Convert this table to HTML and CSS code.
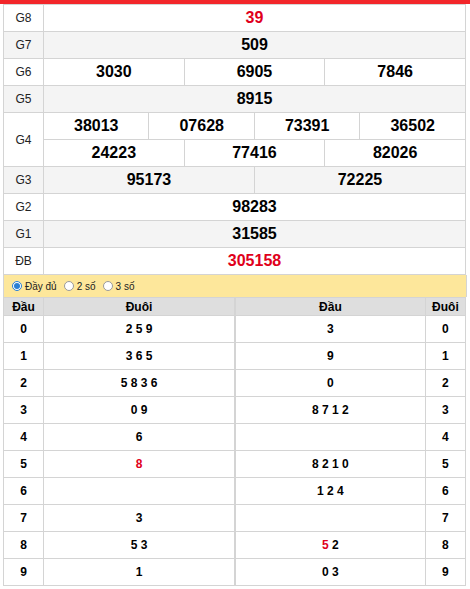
FILE: index.html
```html
<!DOCTYPE html>
<html>
<head>
<meta charset="utf-8">
<link rel="stylesheet" href="styles.css">
</head>
<body>
<div class="topbar"></div>
<div class="wrap">
<table class="kq">
  <colgroup><col class="lbl"><col span="12"></colgroup>
  <tr><td class="l">G8</td><td colspan="12" class="n red">39</td></tr>
  <tr class="alt"><td class="l">G7</td><td colspan="12" class="n">509</td></tr>
  <tr><td class="l">G6</td><td colspan="4" class="n">3030</td><td colspan="4" class="n">6905</td><td colspan="4" class="n">7846</td></tr>
  <tr class="alt"><td class="l">G5</td><td colspan="12" class="n">8915</td></tr>
  <tr><td class="l" rowspan="2">G4</td><td colspan="3" class="n">38013</td><td colspan="3" class="n">07628</td><td colspan="3" class="n">73391</td><td colspan="3" class="n">36502</td></tr>
  <tr><td colspan="4" class="n">24223</td><td colspan="4" class="n">77416</td><td colspan="4" class="n">82026</td></tr>
  <tr class="alt"><td class="l">G3</td><td colspan="6" class="n">95173</td><td colspan="6" class="n">72225</td></tr>
  <tr><td class="l">G2</td><td colspan="12" class="n">98283</td></tr>
  <tr class="alt"><td class="l">G1</td><td colspan="12" class="n">31585</td></tr>
  <tr><td class="l">ĐB</td><td colspan="12" class="n red">305158</td></tr>
</table>
<div class="opts">
  <span class="opt"><span class="radio on"></span>Đầy đủ</span>
  <span class="opt"><span class="radio"></span>2 số</span>
  <span class="opt"><span class="radio"></span>3 số</span>
</div>
<table class="lt">
  <colgroup><col class="c1"><col class="c2"><col class="c3"><col class="c4"></colgroup>
  <tr class="hd"><th>Đầu</th><th class="mid">Đuôi</th><th>Đầu</th><th>Đuôi</th></tr>
  <tr><td>0</td><td class="mid">2 5 9</td><td>3</td><td>0</td></tr>
  <tr><td>1</td><td class="mid">3 6 5</td><td>9</td><td>1</td></tr>
  <tr><td>2</td><td class="mid">5 8 3 6</td><td>0</td><td>2</td></tr>
  <tr><td>3</td><td class="mid">0 9</td><td>8 7 1 2</td><td>3</td></tr>
  <tr><td>4</td><td class="mid">6</td><td></td><td>4</td></tr>
  <tr><td>5</td><td class="mid"><span class="red">8</span></td><td>8 2 1 0</td><td>5</td></tr>
  <tr><td>6</td><td class="mid"></td><td>1 2 4</td><td>6</td></tr>
  <tr><td>7</td><td class="mid">3</td><td></td><td>7</td></tr>
  <tr><td>8</td><td class="mid">5 3</td><td><span class="red">5</span> 2</td><td>8</td></tr>
  <tr><td>9</td><td class="mid">1</td><td>0 3</td><td>9</td></tr>
</table>
</div>
</body>
</html>
```
FILE: styles.css
```css
html, body {
  margin: 0;
  padding: 0;
  background: #fff;
  font-family: "Liberation Sans", Arial, sans-serif;
  color: #000;
}
.topbar {
  height: 4px;
  background: #f2262a;
}
.wrap {
  padding: 0 4px 0 3px;
}
table {
  border-collapse: collapse;
  table-layout: fixed;
  width: 463px;
}
.kq td {
  border: 1px solid #d4d4d4;
  height: 26px;
  padding: 0;
  text-align: center;
}
.kq col.lbl { width: 40px; }
.kq .l {
  font-size: 12px;
  color: #222;
}
.kq .n {
  font-size: 16px;
  font-weight: bold;
}
.kq tr.alt td { background: #f4f4f4; }
.red { color: #e0001b; }
.opts {
  height: 22px;
  background: #fde79b;
  border-left: 1px solid #d4d4d4;
  border-right: 1px solid #d4d4d4;
  display: flex;
  align-items: center;
  padding-left: 8px;
  gap: 7px;
  font-size: 10px;
  color: #222;
  width: 454px;
}
.opt {
  display: flex;
  align-items: center;
  gap: 3px;
}
.radio {
  width: 8px;
  height: 8px;
  border: 1px solid #9a9a9a;
  border-radius: 50%;
  background: #fff;
  box-sizing: content-box;
  position: relative;
}
.radio.on {
  border-color: #2a7fd4;
  background: #fff;
}
.radio.on::after {
  content: "";
  position: absolute;
  left: 1px;
  top: 1px;
  width: 6px;
  height: 6px;
  border-radius: 50%;
  background: #2a7fd4;
}
.lt col.c1 { width: 40px; }
.lt col.c2 { width: 191px; }
.lt col.c3 { width: 190px; }
.lt col.c4 { width: 40px; }
.lt th {
  background: #dedede;
  height: 17px;
  font-size: 12px;
  font-weight: bold;
  padding: 0;
  border: 1px solid #d4d4d4;
  text-align: center;
}
.lt td {
  border: 1px solid #d4d4d4;
  height: 26px;
  padding: 0;
  text-align: center;
  font-size: 12px;
  font-weight: bold;
}
.lt .mid { border-right: 2px solid #d4d4d4; }
```
